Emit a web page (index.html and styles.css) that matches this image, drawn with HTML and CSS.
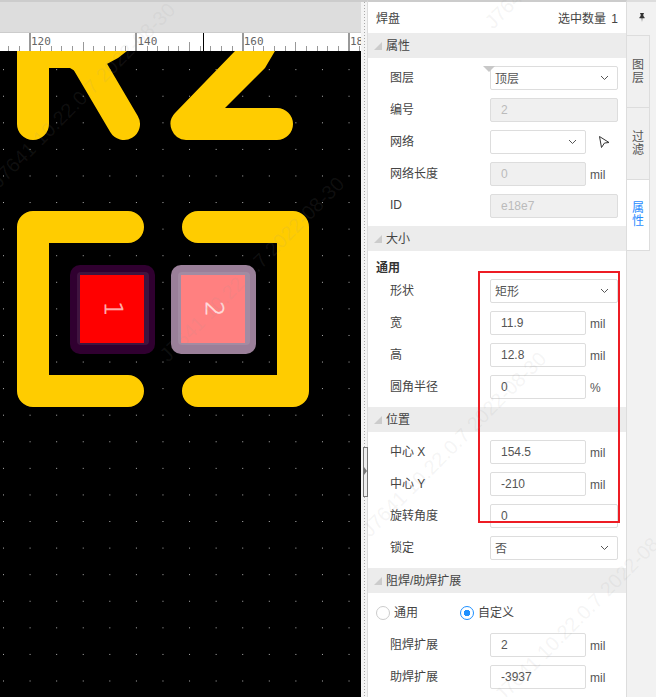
FILE: index.html
```html
<!doctype html>
<html lang="zh-CN">
<head>
  <meta charset="UTF-8">
  <title>焊盘属性</title>
  <link rel="stylesheet" href="styles.css">
</head>
<body>
  <div class="app">
    <div class="editor">
      <div class="toolbar"></div>
      <svg class="ruler" width="361" height="18" viewBox="0 33 361 18">
        <path class="tick" d="M8.500 46v5M19.500 46v5M40.500 46v5M51.500 46v5M61.500 46v5M72.500 46v5M93.500 46v5M104.500 46v5M115.500 46v5M125.500 46v5M147.500 46v5M157.500 46v5M168.500 46v5M178.500 46v5M200.500 46v5M210.500 46v5M221.500 46v5M232.500 46v5M253.500 46v5M263.500 46v5M274.500 46v5M285.500 46v5M306.500 46v5M317.500 46v5M327.500 46v5M338.500 46v5M359.500 46v5"/>
        <path class="tick" d="M83.500 42v9M189.500 42v9M295.500 42v9"/>
        <path class="tick-major" d="M30 33v18M136 33v18M243 33v18M349 33v18"/>
        <path class="tick-cursor" d="M203.500 33v18"/>
        <text class="ruler-num" x="31" y="45">120</text>
        <text class="ruler-num" x="137.500" y="45">140</text>
        <text class="ruler-num" x="243.700" y="45">160</text>
        <text class="ruler-num" x="350" y="45">180</text>
      </svg>
      <svg class="board" width="361" height="646" viewBox="0 51 361 646">
        <defs>
          <pattern id="grid" x="3" y="16" width="26.580" height="26.580" patternUnits="userSpaceOnUse">
            <rect width="1" height="1" fill="#b5b5b5" shape-rendering="crispEdges"/>
          </pattern>
        </defs>
        <rect y="51" width="361" height="646" fill="#000"/>
        <rect y="51" width="361" height="646" fill="url(#grid)"/>

        <!-- R2 -->
        <path class="silk" d="M33 40V124M81 51L124 124"/>
        <path class="silk-fill" d="M40 51H127L118 58L105 65L90 80L70 68H40Z"/>
        <path class="silk-fill" d="M235 51H275L265 68L225 108H277A16 16 0 0 1 277 140H186A16 16 0 0 1 175 113Z"/>

        <!-- outline -->
        <path class="silk" d="M128 227H33V391H128"/>
        <path class="silk" d="M198 227H293V391H198"/>

        <!-- pads -->
        <rect x="70" y="265" width="85" height="89" rx="10" fill="#300030"/>
        <rect x="77" y="272" width="72" height="73" rx="4" fill="#3f143f"/>
        <rect x="80" y="275" width="64" height="68" fill="#f00"/>
        <text class="pad-num pad-num-1" transform="translate(113 309) rotate(90)">1</text>

        <rect x="171" y="265" width="85" height="89" rx="10" fill="#9a7f99"/>
        <rect x="178" y="272" width="72" height="73" rx="4" fill="#a38ba2"/>
        <rect x="181" y="275" width="64" height="68" fill="#ff8080"/>
        <text class="pad-num pad-num-2" transform="translate(214 309) rotate(90)">2</text>
      </svg>
    </div>

    <div class="splitter"><span class="splitter-btn"></span></div>

    <div class="panel">
      <div class="panel-head">
        <span>焊盘</span>
        <span class="count">选中数量 1</span>
      </div>

      <div class="section-title"><i></i>属性</div>
      <div class="section">
        <span class="drop-mark"></span>
        <div class="row">
          <label>图层</label>
          <div class="field select"><span>顶层</span><svg class="chevron" width="9" height="6" viewBox="0 0 9 6"><path d="M1 1l3.500 3.500L8 1"/></svg></div>
        </div>
        <div class="row">
          <label>编号</label>
          <div class="field disabled">2</div>
        </div>
        <div class="row">
          <label>网络</label>
          <div class="field select short"><svg class="chevron" width="9" height="6" viewBox="0 0 9 6"><path d="M1 1l3.500 3.500L8 1"/></svg></div>
          <svg class="pick" width="12" height="14" viewBox="0 0 12 14"><path d="M1.500 1.500L11 7.500L6.500 8L3.500 12.500Z"/></svg>
        </div>
        <div class="row">
          <label>网络长度</label>
          <div class="field short disabled">0</div>
          <span class="unit">mil</span>
        </div>
        <div class="row">
          <label>ID</label>
          <div class="field disabled">e18e7</div>
        </div>
      </div>

      <div class="section-title"><i></i>大小</div>
      <div class="section section-size">
        <div class="sub-title">通用</div>
        <div class="row">
          <label>形状</label>
          <div class="field select"><span>矩形</span><svg class="chevron" width="9" height="6" viewBox="0 0 9 6"><path d="M1 1l3.500 3.500L8 1"/></svg></div>
        </div>
        <div class="row">
          <label>宽</label>
          <div class="field short">11.9</div>
          <span class="unit">mil</span>
        </div>
        <div class="row">
          <label>高</label>
          <div class="field short">12.8</div>
          <span class="unit">mil</span>
        </div>
        <div class="row">
          <label>圆角半径</label>
          <div class="field short">0</div>
          <span class="unit">%</span>
        </div>
      </div>

      <div class="section-title"><i></i>位置</div>
      <div class="section">
        <div class="row">
          <label>中心 X</label>
          <div class="field short">154.5</div>
          <span class="unit">mil</span>
        </div>
        <div class="row">
          <label>中心 Y</label>
          <div class="field short">-210</div>
          <span class="unit">mil</span>
        </div>
        <div class="row">
          <label>旋转角度</label>
          <div class="field">0</div>
        </div>
        <div class="row">
          <label>锁定</label>
          <div class="field select"><span>否</span><svg class="chevron" width="9" height="6" viewBox="0 0 9 6"><path d="M1 1l3.500 3.500L8 1"/></svg></div>
        </div>
      </div>

      <div class="section-title"><i></i>阻焊/助焊扩展</div>
      <div class="section section-mask">
        <div class="radios">
          <span class="radio"><i></i><span>通用</span></span>
          <span class="radio on"><i></i><span>自定义</span></span>
        </div>
        <div class="row">
          <label>阻焊扩展</label>
          <div class="field short">2</div>
          <span class="unit">mil</span>
        </div>
        <div class="row">
          <label>助焊扩展</label>
          <div class="field short">-3937</div>
          <span class="unit">mil</span>
        </div>
      </div>
    </div>

    <div class="tabs">
      <div class="tab-pin">
        <svg width="6" height="9" viewBox="0 0 8 12"><path d="M1.500 0h5v1l-.7.500V4L7.500 6v1H4.500L4 12L3.500 7H.5V6L2.200 4V1.500L1.500 1Z"/></svg>
      </div>
      <div class="tab">图<br>层</div>
      <div class="tab">过<br>滤</div>
      <div class="tab active">属<br>性</div>
    </div>
  </div>

  <div class="note-box"></div>

  <div class="watermark">
    <span class="wm wm-a">J7641 10.22.0.7 2022-08-30</span>
    <span class="wm wm-b">J7641 10.22.0.7 2022-08-30</span>
    <span class="wm wm-c">J7641 10.22.0.7 2022-08-30</span>
    <span class="wm wm-d">J7641 10.22.0.7 2022-08-30</span>
    <span class="wm wm-e">J7641 10.22.0.7 2022-08-30</span>
  </div>
</body>
</html>
```

FILE: styles.css
```css
* {
  box-sizing: border-box;
}
html, body {
  margin: 0;
  height: 697px;
  overflow: hidden;
}
body {
  font-family: "Liberation Sans", "Noto Sans CJK SC", sans-serif;
  font-size: 12px;
  color: #444;
  background: #fff;
}
svg {
  display: block;
}
.app {
  display: flex;
  height: 697px;
}

/* left: canvas */
.editor {
  width: 361px;
  flex: none;
}
.toolbar {
  height: 33px;
  background: #ddd;
  border-top: 2px solid #ccc;
  border-bottom: 1px solid #ccc;
}
.ruler {
  background: #fff;
}
.tick {
  stroke: #999;
  stroke-width: 1;
  fill: none;
}
.tick-major {
  stroke: #999;
  stroke-width: 2;
  fill: none;
}
.tick-cursor {
  stroke: #000;
  stroke-width: 1;
  fill: none;
}
.ruler-num {
  font-family: "DejaVu Sans Mono", monospace;
  font-size: 11px;
  fill: #666;
}
.silk {
  fill: none;
  stroke: #fc0;
  stroke-width: 32;
  stroke-linecap: round;
  stroke-linejoin: round;
}
.silk-fill {
  fill: #fc0;
}
.pad-num {
  font-family: "DejaVu Sans", sans-serif;
  font-size: 24px;
  font-weight: 200;
  stroke-width: .6;
  text-anchor: middle;
  dominant-baseline: central;
}
.pad-num-1 {
  fill: #ffb3b3;
  stroke: #ffb3b3;
}
.pad-num-2 {
  fill: #ffdcdc;
  stroke: #ffdcdc;
}

.splitter {
  position: relative;
  width: 6px;
  flex: none;
  border-top: 2px solid #ccc;
  background: #f4f4f4 linear-gradient(#aaa 50%, transparent 50%) 3px 0 / 1px 3px repeat-y;
}
.splitter-btn {
  position: absolute;
  left: 2px;
  top: 445px;
  width: 5px;
  height: 50px;
  background: #eee;
  border: 1px solid #777;
}
.splitter-btn::after {
  content: "";
  position: absolute;
  left: 0;
  top: 19px;
  border-left: 3px solid #777;
  border-top: 4px solid transparent;
  border-bottom: 4px solid transparent;
}

/* middle: properties */
.panel {
  width: 260px;
  flex: none;
  border-top: 2px solid #ccc;
  border-right: 1px solid #ddd;
  border-left: 1px solid #ddd;
}
.panel-head {
  display: flex;
  justify-content: space-between;
  align-items: center;
  height: 31px;
  padding: 0 8px;
  color: #444;
}
.count {
  word-spacing: 2px;
}
.section-title {
  display: flex;
  align-items: center;
  height: 25px;
  padding: 0 0 2px 6px;
  background: #ececec;
  color: #444;
}
.section-title i {
  width: 0;
  height: 0;
  margin: 2px 4px 0 0;
  border-left: 8px solid transparent;
  border-bottom: 8px solid #ccc;
}
.section {
  position: relative;
  padding-bottom: 8px;
}
.sub-title {
  height: 28px;
  padding: 8px 0 0 8px;
  margin-bottom: -8px;
  line-height: 18px;
  font-weight: bold;
  color: #333;
}
.drop-mark {
  position: absolute;
  left: 115px;
  top: 0;
  border-top: 6px solid #c8c8c8;
  border-left: 6px solid transparent;
  border-right: 6px solid transparent;
}
.row {
  display: flex;
  align-items: center;
  height: 24px;
  margin-top: 8px;
  padding-left: 22px;
}
.row label {
  width: 100px;
  flex: none;
  padding-bottom: 3px;
}
.field {
  display: flex;
  align-items: center;
  justify-content: space-between;
  width: 128px;
  height: 24px;
  padding: 0 10px;
  border: 1px solid #ddd;
  border-radius: 2px;
  background: #fff;
  color: #555;
}
.field.short {
  width: 96px;
}
.field.select {
  padding: 0 8px 0 4px;
}
.field.select span {
  padding-bottom: 2px;
}
.field.select.short {
  justify-content: flex-end;
}
.field.disabled {
  background: #f0f0f0;
  color: #bbb;
}
.chevron path {
  fill: none;
  stroke: #555;
  stroke-width: 1;
}
.unit {
  margin-left: 4px;
  padding-top: 2px;
  color: #555;
}
.pick {
  margin-left: 12px;
}
.pick path {
  fill: none;
  stroke: #333;
  stroke-width: 1;
}
.radios {
  display: flex;
  align-items: center;
  gap: 42px;
  height: 24px;
  margin-top: 8px;
  padding-left: 8px;
}
.radio {
  display: flex;
  align-items: center;
  gap: 4px;
}
.radio span {
  padding-bottom: 3px;
}
.radio i {
  width: 14px;
  height: 14px;
  border: 1px solid #ccc;
  border-radius: 50%;
}
.radio.on i {
  border-color: #1e90ff;
  background: radial-gradient(circle, #1e90ff 3px, transparent 3.500px);
}

/* right: tabs */
.tabs {
  flex: 1;
  background: #f2f2f2;
}
.tab-pin {
  display: flex;
  justify-content: center;
  height: 35px;
  padding-top: 11px;
  border-top: 2px solid #ddd;
}
.tab-pin path {
  fill: #333;
}
.tab {
  display: flex;
  align-items: center;
  justify-content: center;
  width: 23px;
  height: 72px;
  line-height: 13px;
  text-align: center;
  color: #555;
  background: #f0f0f0;
  border-top: 1px solid #ddd;
  border-right: 1px solid #ddd;
}
.tab.active {
  background: #fff;
  color: #2a8cff;
  border-bottom: 1px solid #ddd;
}

.note-box {
  position: absolute;
  left: 478px;
  top: 271px;
  width: 142px;
  height: 252px;
  border: 2px solid #ed1c24;
}

.watermark {
  position: absolute;
  left: 0;
  top: 0;
  width: 656px;
  height: 697px;
  overflow: hidden;
  pointer-events: none;
}
.wm {
  position: absolute;
  font-size: 20px;
  line-height: 20px;
  white-space: nowrap;
  color: rgba(150, 150, 150, .1);
  transform: rotate(-45deg);
  transform-origin: left bottom;
}
.wm-a {
  left: 1px;
  top: 171px;
}
.wm-b {
  left: 170px;
  top: 345px;
}
.wm-c {
  left: 495px;
  top: 12px;
}
.wm-d {
  left: 372px;
  top: 520px;
}
.wm-e {
  left: 505px;
  top: 685px;
}
```
